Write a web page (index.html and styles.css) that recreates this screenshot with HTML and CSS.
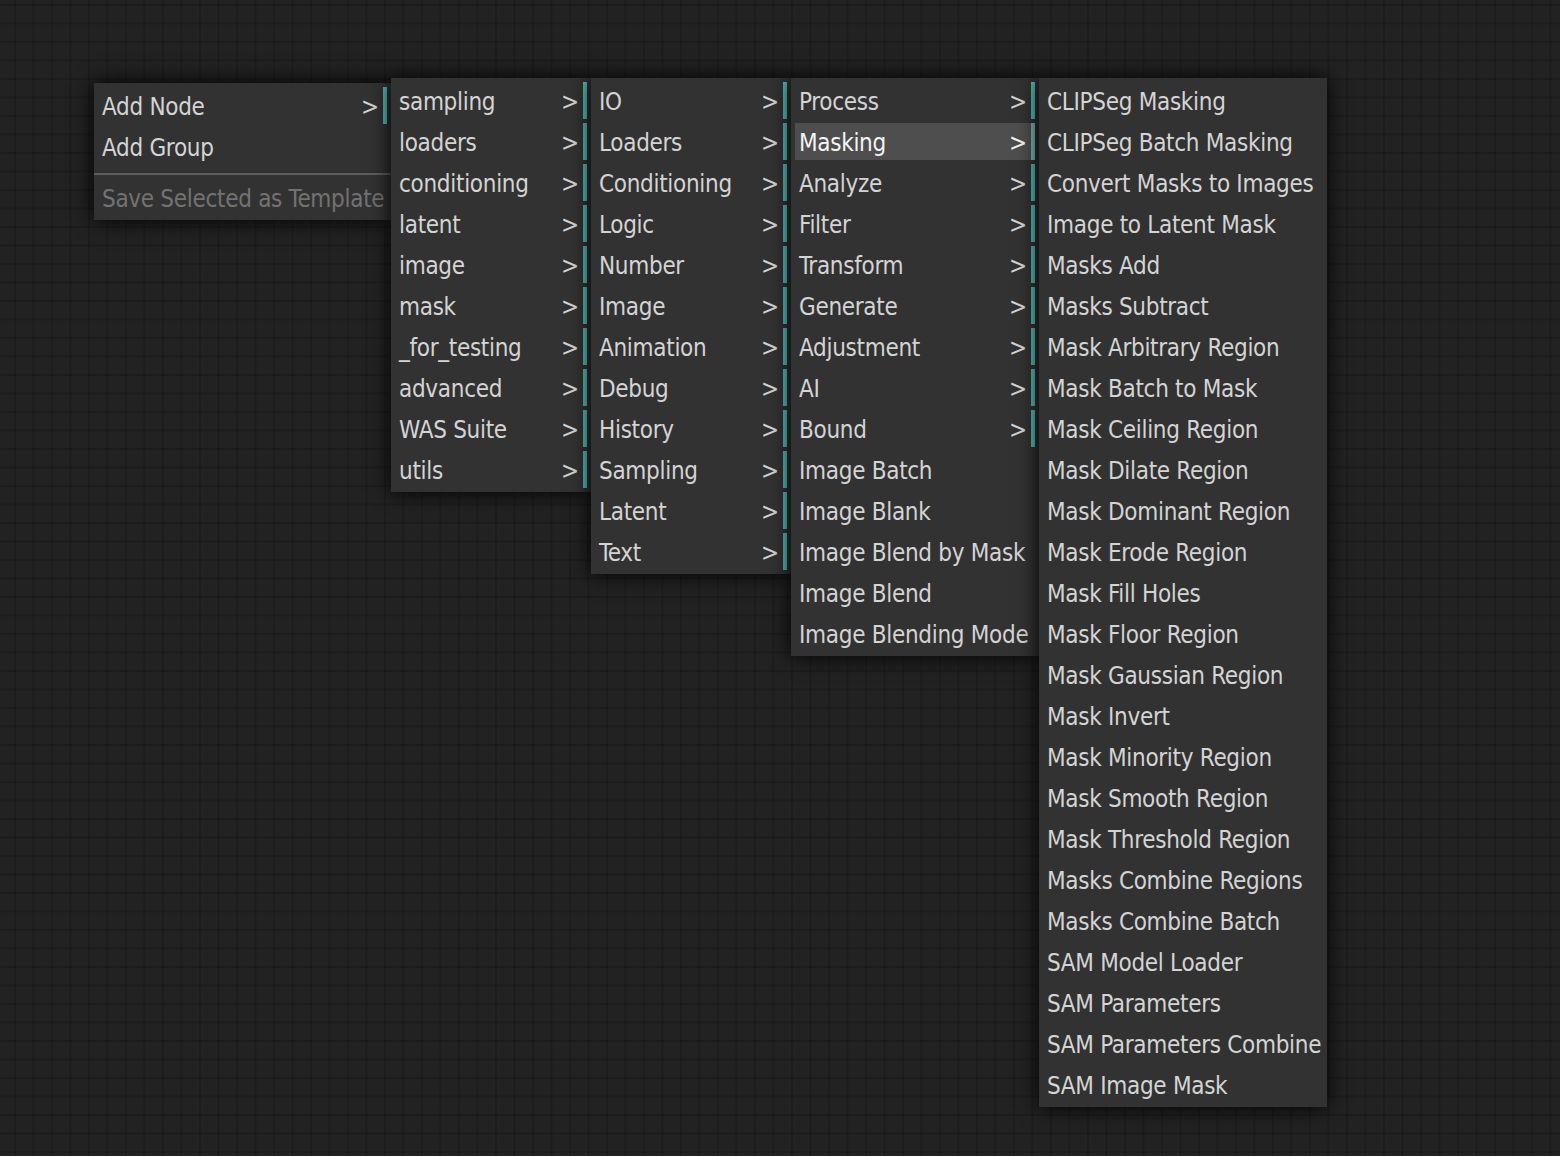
FILE: index.html
```html
<!DOCTYPE html>
<html>
<head>
<meta charset="utf-8">
<title>Context menu</title>
<link rel="stylesheet" href="styles.css">
</head>
<body>
<div class="canvas">
  <div class="menu m1">
    <div class="entry sub">Add Node</div>
    <div class="entry">Add Group</div>
    <div class="separator"></div>
    <div class="entry disabled">Save Selected as Template</div>
  </div>
  <div class="menu m2">
    <div class="entry sub">sampling</div>
    <div class="entry sub">loaders</div>
    <div class="entry sub">conditioning</div>
    <div class="entry sub">latent</div>
    <div class="entry sub">image</div>
    <div class="entry sub">mask</div>
    <div class="entry sub">_for_testing</div>
    <div class="entry sub">advanced</div>
    <div class="entry sub">WAS Suite</div>
    <div class="entry sub">utils</div>
  </div>
  <div class="menu m3">
    <div class="entry sub">IO</div>
    <div class="entry sub">Loaders</div>
    <div class="entry sub">Conditioning</div>
    <div class="entry sub">Logic</div>
    <div class="entry sub">Number</div>
    <div class="entry sub">Image</div>
    <div class="entry sub">Animation</div>
    <div class="entry sub">Debug</div>
    <div class="entry sub">History</div>
    <div class="entry sub">Sampling</div>
    <div class="entry sub">Latent</div>
    <div class="entry sub">Text</div>
  </div>
  <div class="menu m4">
    <div class="entry sub">Process</div>
    <div class="entry sub active">Masking</div>
    <div class="entry sub">Analyze</div>
    <div class="entry sub">Filter</div>
    <div class="entry sub">Transform</div>
    <div class="entry sub">Generate</div>
    <div class="entry sub">Adjustment</div>
    <div class="entry sub">AI</div>
    <div class="entry sub">Bound</div>
    <div class="entry">Image Batch</div>
    <div class="entry">Image Blank</div>
    <div class="entry">Image Blend by Mask</div>
    <div class="entry">Image Blend</div>
    <div class="entry">Image Blending Mode</div>
  </div>
  <div class="menu m5">
    <div class="entry">CLIPSeg Masking</div>
    <div class="entry">CLIPSeg Batch Masking</div>
    <div class="entry">Convert Masks to Images</div>
    <div class="entry">Image to Latent Mask</div>
    <div class="entry">Masks Add</div>
    <div class="entry">Masks Subtract</div>
    <div class="entry">Mask Arbitrary Region</div>
    <div class="entry">Mask Batch to Mask</div>
    <div class="entry">Mask Ceiling Region</div>
    <div class="entry">Mask Dilate Region</div>
    <div class="entry">Mask Dominant Region</div>
    <div class="entry">Mask Erode Region</div>
    <div class="entry">Mask Fill Holes</div>
    <div class="entry">Mask Floor Region</div>
    <div class="entry">Mask Gaussian Region</div>
    <div class="entry">Mask Invert</div>
    <div class="entry">Mask Minority Region</div>
    <div class="entry">Mask Smooth Region</div>
    <div class="entry">Mask Threshold Region</div>
    <div class="entry">Masks Combine Regions</div>
    <div class="entry">Masks Combine Batch</div>
    <div class="entry">SAM Model Loader</div>
    <div class="entry">SAM Parameters</div>
    <div class="entry">SAM Parameters Combine</div>
    <div class="entry">SAM Image Mask</div>
  </div>
</div>
</body>
</html>
```
FILE: styles.css
```css
html, body {
  margin: 0;
  padding: 0;
}

body {
  width: 1560px;
  height: 1156px;
  overflow: hidden;
  background-color: #222222;
  font-family: "DejaVu Sans Condensed", "DejaVu Sans", sans-serif;
}

.canvas {
  position: relative;
  width: 1560px;
  height: 1156px;
  background-color: #222222;
  background-image:
    linear-gradient(to right, rgba(0, 0, 0, 0.16) 0, rgba(0, 0, 0, 0.16) 2px, transparent 2px),
    linear-gradient(to bottom, rgba(0, 0, 0, 0.16) 0, rgba(0, 0, 0, 0.16) 2px, transparent 2px);
  background-size: 18.5px 18.5px;
  background-position: 14px 4px;
}

.menu {
  position: absolute;
  background-color: #323232;
  box-shadow: 0 0 20px #000;
  top: 78px;
}

.m1 { left: 94px; top: 83px; width: 297px; }
.m2 { left: 391px; width: 200px; }
.m3 { left: 591px; width: 200px; }
.m4 { left: 791px; width: 248px; }
.m5 { left: 1039px; width: 288px; }

.entry {
  position: relative;
  height: 35px;
  padding-top: 2px;
  line-height: 37px;
  margin: 4px;
  padding-left: 4px;
  font-size: 24px;
  letter-spacing: -0.3px;
  color: #d4d4d4;
  white-space: nowrap;
}

.entry.sub {
  border-right: 4px solid #55bdb9;
}

.entry.sub::after {
  content: ">";
  position: absolute;
  top: 2px;
  right: 4px;
  letter-spacing: 0;
}

.entry.active {
  background-color: #4e4e4e;
  color: #f4f4f4;
  border-right-color: #7cb9b5;
}

.entry.disabled {
  color: #727272;
}

.separator {
  height: 0;
  margin: 6px 0 4px 0;
  border-top: 2px solid #303030;
  border-bottom: 2px solid #5e5e5e;
}
```
